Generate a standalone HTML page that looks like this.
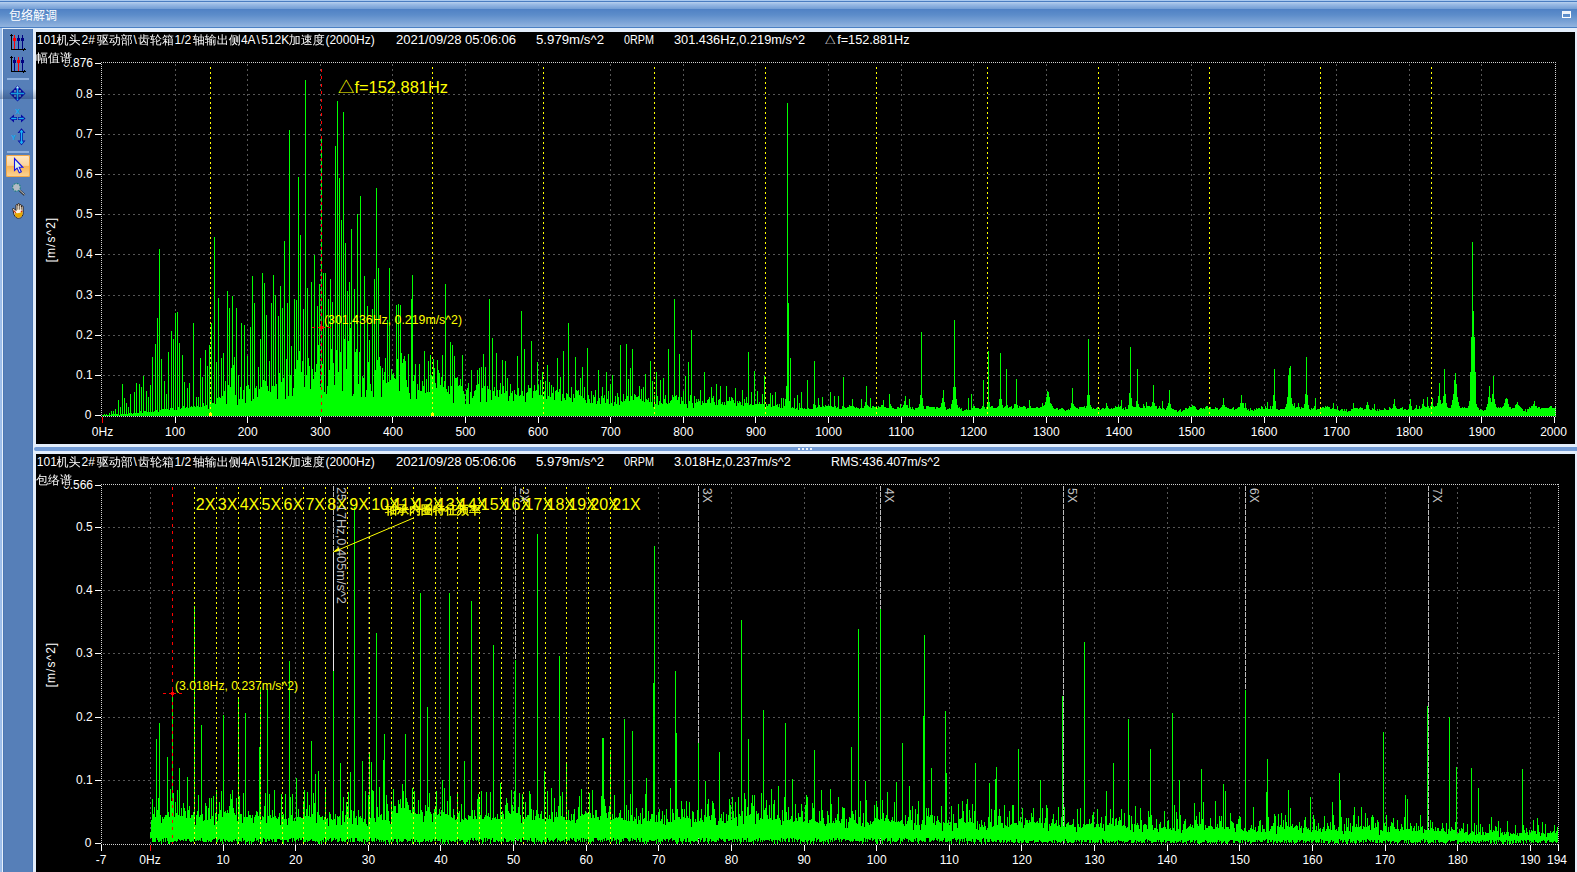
<!DOCTYPE html>
<html lang="zh"><head><meta charset="utf-8"><title>包络解调</title>
<style>
html,body{margin:0;padding:0;}
body{width:1577px;height:872px;overflow:hidden;position:relative;background:#e3eefb;font-family:"Liberation Sans","Noto Sans CJK SC",sans-serif;font-size:12px;}
#title{position:absolute;left:0;top:0;width:1577px;height:28px;
 background:linear-gradient(to bottom,#a9c9ef 0,#a9c9ef 1px,#4a7dc1 1px,#4a7dc1 2px,#bad2ee 2px,#9dbde6 4px,#729dd4 9px,#5082c5 9.5px,#5d8dca 15px,#7ba3d6 22px,#8fb2de 26.5px,#4a7fc3 27px,#4a7fc3 28px);}
#title span{position:absolute;left:9px;top:7.7px;color:#fff;font-size:12px;line-height:16px;letter-spacing:0px;}
#maxbtn{position:absolute;left:1562px;top:11px;width:7px;height:3px;border:1px solid #fff;border-top:3px solid #eef3fb;}
#lstrip{position:absolute;left:0;top:28px;width:3px;height:844px;background:linear-gradient(to right,#a2c2ec 0,#98b9e6 2px,#e8f1fc 2px,#e8f1fc 3px);}
#toolbar{position:absolute;left:3px;top:29px;width:30px;height:843px;background:#567fb8;box-shadow:inset 1px 0 0 #4c77b3,inset -1px 0 0 #4c77b3;}
.sep{position:absolute;left:4px;margin-top:1px;width:22px;height:2px;background:#8eb0de;}
#selbtn{position:absolute;left:3px;top:126px;width:24px;height:22px;border-radius:2px;
 background:linear-gradient(to bottom,#fee9c8 0,#fbd49c 47%,#f8b458 52%,#fcd698 100%);box-shadow:0 0 0 1px #f3a848 inset;}
.panel{position:absolute;left:36px;width:1539px;background:#000;}
#p1{top:32px;height:412px;}
#p2{top:454px;height:418px;}
#split{position:absolute;left:34px;top:447px;width:1543px;height:4px;background:#739cd6;border-radius:2px 0 0 2px;}
#grip{position:absolute;left:764px;top:1px;width:14px;height:2px;background:repeating-linear-gradient(to right,#eef4fc 0,#eef4fc 2px,transparent 2px,transparent 4px);}
svg{position:absolute;left:0;top:0;}
svg text{font-family:"Liberation Sans","Noto Sans CJK SC",sans-serif;}
.w{fill:#fff;font-size:12px;}
.y{fill:#ffff00;}
.cj{font-family:"Liberation Sans","WenQuanYi Zen Hei","Noto Sans CJK SC",sans-serif;}
</style></head><body>
<div id="title"><span>包络解调</span><div id="maxbtn"></div></div>
<div id="lstrip"></div>
<div id="toolbar">
<div class="sep" style="top:48px"></div>
<div class="sep" style="top:121px"></div>
<div id="selbtn"></div>

<svg width="30" height="200" viewBox="3 29 30 200">
<g shape-rendering="crispEdges"><path d="M11.5 34v15h14" stroke="#000" fill="none"/><path d="M10 36l1.5-2.5l1.5 2.5zM23.5 47.5l2.5 1.5l-2.5 1.5z" fill="#000"/><path d="M14.5 35v14" stroke="#ff0000" stroke-width="1"/><rect x="13.0" y="38" width="3" height="3" fill="#ff0000"/><path d="M18.5 35v14" stroke="#000080" stroke-width="1"/><rect x="17.0" y="38" width="3" height="3" fill="#000080"/><path d="M22.5 35v14" stroke="#000080" stroke-width="1"/><rect x="21.0" y="38" width="3" height="3" fill="#000080"/></g>
<g shape-rendering="crispEdges"><path d="M11.5 56v15h14" stroke="#000" fill="none"/><path d="M10 58l1.5-2.5l1.5 2.5zM23.5 69.5l2.5 1.5l-2.5 1.5z" fill="#000"/><path d="M14.5 57v14" stroke="#000080" stroke-width="1"/><rect x="13.0" y="60" width="3" height="3" fill="#000080"/><path d="M18.5 57v14" stroke="#ff0000" stroke-width="1"/><rect x="17.0" y="60" width="3" height="3" fill="#ff0000"/><path d="M22.5 57v14" stroke="#000080" stroke-width="1"/><rect x="21.0" y="60" width="3" height="3" fill="#000080"/></g>
<path d="M17.5 85.5L25.5 93.5L17.5 101.5L9.5 93.5z" fill="#0808a0"/>
<path d="M14 90h2.2v2.2H14zM18.8 90H21v2.2h-2.2zM14 94.8h2.2V97H14zM18.8 94.8H21V97h-2.2z" fill="#5a7fb4"/>
<path d="M10.8 93.5h13.4M17.5 86.8v13.4" stroke="#18b4f4" stroke-width="1.5" fill="none"/>
<path d="M17.5 86l1.6 2.2h-3.2z" fill="#c8f0ff"/>
<path d="M9.5 118.5l4.5-4v2.5h3v3h-3v2.5zM25.5 118.5l-4.5-4v2.5h-3v3h3v2.5z" fill="#0808a0"/>
<path d="M11.2 118.5h5.3M18.5 118.5h5.3" stroke="#18b4f4" stroke-width="1.5" fill="none"/>
<text x="17.5" y="113.5" font-size="7" font-weight="bold" fill="#10a8f0" text-anchor="middle">X</text>
<path d="M21.5 128.3l4 4.7h-2.5v7.500h2.5l-4 4.700l-4-4.700h2.5v-7.500h-2.5z" fill="#0808a0"/>
<path d="M21.5 130.500v13" stroke="#18b4f4" stroke-width="1.5" fill="none"/>
<path d="M21.5 129.800l2.200 2.600h-4.400zM21.5 144.200l2.200-2.600h-4.400z" fill="#18b4f4"/>
<text x="13.5" y="139.5" font-size="7" font-weight="bold" fill="#10a8f0" text-anchor="middle">Y</text>
<path d="M14.5 158.5v12l2.6-2.4l2.2 4.6l2-0.9l-2.1-4.5h3.6z" fill="#dcf4ec" stroke="#1414e6" stroke-width="1.1" stroke-linejoin="miter"/>
<circle cx="16.5" cy="187.3" r="3.9" fill="#b4bcc4" stroke="#1f7f7f" stroke-width="1.1" stroke-dasharray="2 1"/><path d="M19.8 190.600l4.8 4.400" stroke="#282828" stroke-width="2.2"/><path d="M19.8 190.300l4.8 4.400" stroke="#e0e0e0" stroke-width="0.9"/>
<g transform="translate(0 2.2)"><path d="M13 208c-1-1.5 0-2.5 1.5-1.2l1.5 1.5v-5c0-1.3 1.8-1.3 1.8 0v-1c0-1.3 1.8-1.3 1.8 0v1c0-1.2 1.8-1.2 1.8 0v1.2c0-1.1 1.7-1.1 1.7 0v6c0 3-1.5 5.5-4.5 5.5c-2.500 0-3.500-1.500-4.500-3.500z" fill="#fff4e4" stroke="#201000" stroke-width="0.9"/><path d="M15.200 210.500c2 1 5 0.500 7.400-1.500v1.500c0 2.800-1.400 5-4 5c-2 0-3-1.200-3.800-2.800z" fill="#e8a800"/><path d="M17.800 203.500v4M19.600 203.500v4M21.400 204v3.500" stroke="#201000" stroke-width="0.6"/><path d="M13.800 208.500l2 2.200" stroke="#d03010" stroke-width="1.2" fill="none"/><circle cx="21.500" cy="209.200" r="0.800" fill="#d03010"/></g>
</svg></div>
<div style="position:absolute;left:0;top:89px;width:36px;height:10px;background:linear-gradient(to bottom,rgba(20,40,80,0),rgba(20,40,80,0.32))"></div>
<div class="panel" id="p1"><svg width="1539" height="412" viewBox="36 32 1539 412">
<g shape-rendering="crispEdges" fill="none" stroke-width="1">
<path d="M175.5 64V416" stroke="#565656" stroke-dasharray="2 3" stroke-dashoffset="0"/>
<path d="M247.5 64V416" stroke="#565656" stroke-dasharray="2 3" stroke-dashoffset="0"/>
<path d="M320.5 64V416" stroke="#565656" stroke-dasharray="2 3" stroke-dashoffset="0"/>
<path d="M392.5 64V416" stroke="#565656" stroke-dasharray="2 3" stroke-dashoffset="0"/>
<path d="M465.5 64V416" stroke="#565656" stroke-dasharray="2 3" stroke-dashoffset="0"/>
<path d="M538.5 64V416" stroke="#565656" stroke-dasharray="2 3" stroke-dashoffset="0"/>
<path d="M610.5 64V416" stroke="#565656" stroke-dasharray="2 3" stroke-dashoffset="0"/>
<path d="M683.5 64V416" stroke="#565656" stroke-dasharray="2 3" stroke-dashoffset="0"/>
<path d="M755.5 64V416" stroke="#565656" stroke-dasharray="2 3" stroke-dashoffset="0"/>
<path d="M828.5 64V416" stroke="#565656" stroke-dasharray="2 3" stroke-dashoffset="0"/>
<path d="M901.5 64V416" stroke="#565656" stroke-dasharray="2 3" stroke-dashoffset="0"/>
<path d="M973.5 64V416" stroke="#565656" stroke-dasharray="2 3" stroke-dashoffset="0"/>
<path d="M1046.5 64V416" stroke="#565656" stroke-dasharray="2 3" stroke-dashoffset="0"/>
<path d="M1118.5 64V416" stroke="#565656" stroke-dasharray="2 3" stroke-dashoffset="0"/>
<path d="M1191.5 64V416" stroke="#565656" stroke-dasharray="2 3" stroke-dashoffset="0"/>
<path d="M1264.5 64V416" stroke="#565656" stroke-dasharray="2 3" stroke-dashoffset="0"/>
<path d="M1336.5 64V416" stroke="#565656" stroke-dasharray="2 3" stroke-dashoffset="0"/>
<path d="M1409.5 64V416" stroke="#565656" stroke-dasharray="2 3" stroke-dashoffset="0"/>
<path d="M1481.5 64V416" stroke="#565656" stroke-dasharray="2 3" stroke-dashoffset="0"/>
<path d="M103 375.5H1555" stroke="#565656" stroke-dasharray="2 3"/>
<path d="M103 335.5H1555" stroke="#565656" stroke-dasharray="2 3"/>
<path d="M103 295.5H1555" stroke="#565656" stroke-dasharray="2 3"/>
<path d="M103 254.5H1555" stroke="#565656" stroke-dasharray="2 3"/>
<path d="M103 214.5H1555" stroke="#565656" stroke-dasharray="2 3"/>
<path d="M103 174.5H1555" stroke="#565656" stroke-dasharray="2 3"/>
<path d="M103 134.5H1555" stroke="#565656" stroke-dasharray="2 3"/>
<path d="M103 94.5H1555" stroke="#565656" stroke-dasharray="2 3"/>
<path d="M95 415.5h6M95 375.5h6M95 335.5h6M95 295.5h6M95 254.5h6M95 214.5h6M95 174.5h6M95 134.5h6M95 94.5h6M95 63.5h6M175.5 417v6M247.5 417v6M320.5 417v6M392.5 417v6M465.5 417v6M538.5 417v6M610.5 417v6M683.5 417v6M755.5 417v6M828.5 417v6M901.5 417v6M973.5 417v6M1046.5 417v6M1118.5 417v6M1191.5 417v6M1264.5 417v6M1336.5 417v6M1409.5 417v6M1481.5 417v6M1554.5 417v6" stroke="#fff"/>
<path d="M102.5 417v6" stroke="#ff0000"/>
<path d="M102.5 416v-1M103.5 416v-1M104.5 416v-2M105.5 416v-1M106.5 416v-2M107.5 416v-1M108.5 416v-1M109.5 416v-3M110.5 416v-1M111.5 416v-5M112.5 416v-2M113.5 416v-5M114.5 416v-2M115.5 416v-7M116.5 416v-2M117.5 416v-2M118.5 416v-16M119.5 416v-1M120.5 416v-9M121.5 416v-2M122.5 416v-32M123.5 416v-2M124.5 416v-18M125.5 416v-2M126.5 416v-13M127.5 416v-2M128.5 416v-9M129.5 416v-3M130.5 416v-22M131.5 416v-3M132.5 416v-2M133.5 416v-3M134.5 416v-24M135.5 416v-3M136.5 416v-33M137.5 416v-3M138.5 416v-3M139.5 416v-32M140.5 416v-5M141.5 416v-29M142.5 416v-3M143.5 416v-40M144.5 416v-5M145.5 416v-5M146.5 416v-25M147.5 416v-4M148.5 416v-19M149.5 416v-4M150.5 416v-31M151.5 416v-4M152.5 416v-59M153.5 416v-4M154.5 416v-5M155.5 416v-72M156.5 416v-6M157.5 416v-98M158.5 416v-4M159.5 416v-167M160.5 416v-6M161.5 416v-57M162.5 416v-7M163.5 416v-7M164.5 416v-35M165.5 416v-7M166.5 416v-22M167.5 416v-7M168.5 416v-64M169.5 416v-6M170.5 416v-8M171.5 416v-85M172.5 416v-8M173.5 416v-77M174.5 416v-6M175.5 416v-103M176.5 416v-6M177.5 416v-104M178.5 416v-9M179.5 416v-73M180.5 416v-7M181.5 416v-8M182.5 416v-61M183.5 416v-10M184.5 416v-34M185.5 416v-8M186.5 416v-9M187.5 416v-28M188.5 416v-8M189.5 416v-33M190.5 416v-9M191.5 416v-10M192.5 416v-9M193.5 416v-93M194.5 416v-10M195.5 416v-9M196.5 416v-19M197.5 416v-10M198.5 416v-19M199.5 416v-9M200.5 416v-58M201.5 416v-9M202.5 416v-39M203.5 416v-13M204.5 416v-10M205.5 416v-66M206.5 416v-11M207.5 416v-50M208.5 416v-7M209.5 416v-71M210.5 416v-16M211.5 416v-93M212.5 416v-13M213.5 416v-13M214.5 416v-179M215.5 416v-12M216.5 416v-54M217.5 416v-18M218.5 416v-118M219.5 416v-19M220.5 416v-18M221.5 416v-58M222.5 416v-20M223.5 416v-63M224.5 416v-25M225.5 416v-35M226.5 416v-12M227.5 416v-125M228.5 416v-31M229.5 416v-108M230.5 416v-29M231.5 416v-48M232.5 416v-120M233.5 416v-51M234.5 416v-59M235.5 416v-21M236.5 416v-108M237.5 416v-11M238.5 416v-41M239.5 416v-17M240.5 416v-29M241.5 416v-93M242.5 416v-17M243.5 416v-26M244.5 416v-91M245.5 416v-13M246.5 416v-30M247.5 416v-60M248.5 416v-31M249.5 416v-27M250.5 416v-89M251.5 416v-15M252.5 416v-140M253.5 416v-17M254.5 416v-113M255.5 416v-28M256.5 416v-30M257.5 416v-19M258.5 416v-49M259.5 416v-27M260.5 416v-77M261.5 416v-29M262.5 416v-143M263.5 416v-36M264.5 416v-133M265.5 416v-35M266.5 416v-101M267.5 416v-30M268.5 416v-25M269.5 416v-55M270.5 416v-24M271.5 416v-113M272.5 416v-30M273.5 416v-141M274.5 416v-30M275.5 416v-121M276.5 416v-32M277.5 416v-17M278.5 416v-100M279.5 416v-43M280.5 416v-130M281.5 416v-34M282.5 416v-108M283.5 416v-38M284.5 416v-175M285.5 416v-17M286.5 416v-57M287.5 416v-113M288.5 416v-20M289.5 416v-286M290.5 416v-41M291.5 416v-70M292.5 416v-20M293.5 416v-28M294.5 416v-117M295.5 416v-47M296.5 416v-116M297.5 416v-56M298.5 416v-239M299.5 416v-65M300.5 416v-181M301.5 416v-44M302.5 416v-55M303.5 416v-107M304.5 416v-29M305.5 416v-336M306.5 416v-41M307.5 416v-128M308.5 416v-58M309.5 416v-50M310.5 416v-27M311.5 416v-134M312.5 416v-47M313.5 416v-37M314.5 416v-161M315.5 416v-44M316.5 416v-52M317.5 416v-110M318.5 416v-71M319.5 416v-132M320.5 416v-29M321.5 416v-280M322.5 416v-52M323.5 416v-143M324.5 416v-24M325.5 416v-143M326.5 416v-22M327.5 416v-30M328.5 416v-117M329.5 416v-46M330.5 416v-137M331.5 416v-67M332.5 416v-114M333.5 416v-53M334.5 416v-31M335.5 416v-270M336.5 416v-66M337.5 416v-315M338.5 416v-44M339.5 416v-238M340.5 416v-64M341.5 416v-196M342.5 416v-25M343.5 416v-304M344.5 416v-77M345.5 416v-173M346.5 416v-47M347.5 416v-125M348.5 416v-75M349.5 416v-134M350.5 416v-88M351.5 416v-187M352.5 416v-20M353.5 416v-22M354.5 416v-127M355.5 416v-64M356.5 416v-67M357.5 416v-202M358.5 416v-32M359.5 416v-64M360.5 416v-220M361.5 416v-19M362.5 416v-40M363.5 416v-38M364.5 416v-140M365.5 416v-19M366.5 416v-26M367.5 416v-110M368.5 416v-54M369.5 416v-76M370.5 416v-32M371.5 416v-25M372.5 416v-107M373.5 416v-19M374.5 416v-137M375.5 416v-46M376.5 416v-228M377.5 416v-56M378.5 416v-148M379.5 416v-59M380.5 416v-50M381.5 416v-19M382.5 416v-48M383.5 416v-36M384.5 416v-44M385.5 416v-58M386.5 416v-33M387.5 416v-96M388.5 416v-34M389.5 416v-148M390.5 416v-36M391.5 416v-47M392.5 416v-41M393.5 416v-43M394.5 416v-38M395.5 416v-37M396.5 416v-111M397.5 416v-57M398.5 416v-112M399.5 416v-25M400.5 416v-111M401.5 416v-63M402.5 416v-53M403.5 416v-57M404.5 416v-60M405.5 416v-55M406.5 416v-36M407.5 416v-29M408.5 416v-62M409.5 416v-23M410.5 416v-17M411.5 416v-117M412.5 416v-141M413.5 416v-35M414.5 416v-41M415.5 416v-52M416.5 416v-17M417.5 416v-32M418.5 416v-26M419.5 416v-52M420.5 416v-25M421.5 416v-25M422.5 416v-35M423.5 416v-30M424.5 416v-65M425.5 416v-23M426.5 416v-37M427.5 416v-24M428.5 416v-55M429.5 416v-24M430.5 416v-61M431.5 416v-41M432.5 416v-40M433.5 416v-57M434.5 416v-48M435.5 416v-33M436.5 416v-28M437.5 416v-56M438.5 416v-46M439.5 416v-43M440.5 416v-31M441.5 416v-39M442.5 416v-61M443.5 416v-29M444.5 416v-35M445.5 416v-132M446.5 416v-27M447.5 416v-24M448.5 416v-30M449.5 416v-22M450.5 416v-74M451.5 416v-30M452.5 416v-71M453.5 416v-13M454.5 416v-60M455.5 416v-38M456.5 416v-38M457.5 416v-39M458.5 416v-30M459.5 416v-31M460.5 416v-37M461.5 416v-30M462.5 416v-61M463.5 416v-25M464.5 416v-22M465.5 416v-12M466.5 416v-26M467.5 416v-28M468.5 416v-33M469.5 416v-12M470.5 416v-24M471.5 416v-46M472.5 416v-18M473.5 416v-20M474.5 416v-25M475.5 416v-26M476.5 416v-31M477.5 416v-46M478.5 416v-32M479.5 416v-48M480.5 416v-14M481.5 416v-49M482.5 416v-28M483.5 416v-62M484.5 416v-30M485.5 416v-49M486.5 416v-14M487.5 416v-30M488.5 416v-27M489.5 416v-117M490.5 416v-26M491.5 416v-16M492.5 416v-78M493.5 416v-25M494.5 416v-29M495.5 416v-20M496.5 416v-63M497.5 416v-26M498.5 416v-19M499.5 416v-26M500.5 416v-33M501.5 416v-22M502.5 416v-56M503.5 416v-30M504.5 416v-23M505.5 416v-55M506.5 416v-25M507.5 416v-38M508.5 416v-15M509.5 416v-20M510.5 416v-32M511.5 416v-23M512.5 416v-25M513.5 416v-15M514.5 416v-26M515.5 416v-22M516.5 416v-21M517.5 416v-60M518.5 416v-28M519.5 416v-20M520.5 416v-21M521.5 416v-105M522.5 416v-25M523.5 416v-20M524.5 416v-67M525.5 416v-14M526.5 416v-23M527.5 416v-24M528.5 416v-31M529.5 416v-28M530.5 416v-28M531.5 416v-75M532.5 416v-18M533.5 416v-25M534.5 416v-31M535.5 416v-25M536.5 416v-26M537.5 416v-54M538.5 416v-31M539.5 416v-21M540.5 416v-36M541.5 416v-21M542.5 416v-44M543.5 416v-20M544.5 416v-25M545.5 416v-35M546.5 416v-17M547.5 416v-51M548.5 416v-20M549.5 416v-34M550.5 416v-19M551.5 416v-31M552.5 416v-23M553.5 416v-29M554.5 416v-16M555.5 416v-25M556.5 416v-26M557.5 416v-58M558.5 416v-24M559.5 416v-27M560.5 416v-39M561.5 416v-15M562.5 416v-22M563.5 416v-65M564.5 416v-18M565.5 416v-16M566.5 416v-23M567.5 416v-22M568.5 416v-93M569.5 416v-19M570.5 416v-18M571.5 416v-29M572.5 416v-14M573.5 416v-22M574.5 416v-18M575.5 416v-59M576.5 416v-26M577.5 416v-25M578.5 416v-26M579.5 416v-21M580.5 416v-38M581.5 416v-20M582.5 416v-49M583.5 416v-18M584.5 416v-29M585.5 416v-16M586.5 416v-13M587.5 416v-68M588.5 416v-21M589.5 416v-17M590.5 416v-13M591.5 416v-25M592.5 416v-13M593.5 416v-21M594.5 416v-19M595.5 416v-26M596.5 416v-12M597.5 416v-15M598.5 416v-46M599.5 416v-18M600.5 416v-12M601.5 416v-20M602.5 416v-29M603.5 416v-18M604.5 416v-21M605.5 416v-13M606.5 416v-44M607.5 416v-17M608.5 416v-25M609.5 416v-12M610.5 416v-32M611.5 416v-13M612.5 416v-41M613.5 416v-10M614.5 416v-14M615.5 416v-20M616.5 416v-12M617.5 416v-23M618.5 416v-19M619.5 416v-11M620.5 416v-71M621.5 416v-15M622.5 416v-14M623.5 416v-22M624.5 416v-15M625.5 416v-17M626.5 416v-72M627.5 416v-20M628.5 416v-37M629.5 416v-15M630.5 416v-48M631.5 416v-20M632.5 416v-67M633.5 416v-16M634.5 416v-22M635.5 416v-21M636.5 416v-19M637.5 416v-19M638.5 416v-20M639.5 416v-30M640.5 416v-17M641.5 416v-27M642.5 416v-15M643.5 416v-29M644.5 416v-14M645.5 416v-42M646.5 416v-17M647.5 416v-16M648.5 416v-18M649.5 416v-14M650.5 416v-55M651.5 416v-14M652.5 416v-35M653.5 416v-9M654.5 416v-21M655.5 416v-12M656.5 416v-44M657.5 416v-20M658.5 416v-11M659.5 416v-15M660.5 416v-36M661.5 416v-13M662.5 416v-12M663.5 416v-38M664.5 416v-17M665.5 416v-21M666.5 416v-13M667.5 416v-12M668.5 416v-67M669.5 416v-13M670.5 416v-15M671.5 416v-16M672.5 416v-21M673.5 416v-19M674.5 416v-117M675.5 416v-20M676.5 416v-21M677.5 416v-16M678.5 416v-19M679.5 416v-62M680.5 416v-12M681.5 416v-19M682.5 416v-15M683.5 416v-25M684.5 416v-12M685.5 416v-40M686.5 416v-12M687.5 416v-8M688.5 416v-54M689.5 416v-15M690.5 416v-21M691.5 416v-86M692.5 416v-13M693.5 416v-8M694.5 416v-20M695.5 416v-13M696.5 416v-17M697.5 416v-14M698.5 416v-17M699.5 416v-15M700.5 416v-26M701.5 416v-11M702.5 416v-15M703.5 416v-13M704.5 416v-44M705.5 416v-13M706.5 416v-13M707.5 416v-16M708.5 416v-17M709.5 416v-19M710.5 416v-13M711.5 416v-29M712.5 416v-18M713.5 416v-20M714.5 416v-14M715.5 416v-11M716.5 416v-32M717.5 416v-11M718.5 416v-16M719.5 416v-17M720.5 416v-30M721.5 416v-12M722.5 416v-14M723.5 416v-11M724.5 416v-14M725.5 416v-11M726.5 416v-30M727.5 416v-15M728.5 416v-15M729.5 416v-19M730.5 416v-15M731.5 416v-19M732.5 416v-18M733.5 416v-16M734.5 416v-13M735.5 416v-28M736.5 416v-10M737.5 416v-15M738.5 416v-13M739.5 416v-15M740.5 416v-14M741.5 416v-11M742.5 416v-26M743.5 416v-10M744.5 416v-17M745.5 416v-13M746.5 416v-19M747.5 416v-13M748.5 416v-64M749.5 416v-11M750.5 416v-12M751.5 416v-24M752.5 416v-11M753.5 416v-11M754.5 416v-45M755.5 416v-12M756.5 416v-12M757.5 416v-25M758.5 416v-12M759.5 416v-14M760.5 416v-12M761.5 416v-12M762.5 416v-22M763.5 416v-12M764.5 416v-40M765.5 416v-7M766.5 416v-12M767.5 416v-10M768.5 416v-12M769.5 416v-12M770.5 416v-23M771.5 416v-9M772.5 416v-21M773.5 416v-10M774.5 416v-10M775.5 416v-24M776.5 416v-11M777.5 416v-12M778.5 416v-9M779.5 416v-12M780.5 416v-8M781.5 416v-18M782.5 416v-8M783.5 416v-18M784.5 416v-10M785.5 416v-17M786.5 416v-30M787.5 416v-313M788.5 416v-113M789.5 416v-15M790.5 416v-58M791.5 416v-8M792.5 416v-9M793.5 416v-8M794.5 416v-18M795.5 416v-7M796.5 416v-8M797.5 416v-21M798.5 416v-6M799.5 416v-13M800.5 416v-8M801.5 416v-24M802.5 416v-8M803.5 416v-7M804.5 416v-8M805.5 416v-7M806.5 416v-7M807.5 416v-36M808.5 416v-8M809.5 416v-7M810.5 416v-7M811.5 416v-7M812.5 416v-7M813.5 416v-12M814.5 416v-55M815.5 416v-11M816.5 416v-8M817.5 416v-9M818.5 416v-18M819.5 416v-11M820.5 416v-9M821.5 416v-9M822.5 416v-19M823.5 416v-10M824.5 416v-9M825.5 416v-11M826.5 416v-10M827.5 416v-10M828.5 416v-11M829.5 416v-10M830.5 416v-24M831.5 416v-10M832.5 416v-9M833.5 416v-9M834.5 416v-20M835.5 416v-10M836.5 416v-8M837.5 416v-9M838.5 416v-20M839.5 416v-7M840.5 416v-7M841.5 416v-7M842.5 416v-10M843.5 416v-39M844.5 416v-9M845.5 416v-8M846.5 416v-8M847.5 416v-9M848.5 416v-9M849.5 416v-11M850.5 416v-10M851.5 416v-10M852.5 416v-17M853.5 416v-10M854.5 416v-9M855.5 416v-8M856.5 416v-9M857.5 416v-8M858.5 416v-8M859.5 416v-7M860.5 416v-8M861.5 416v-17M862.5 416v-8M863.5 416v-8M864.5 416v-10M865.5 416v-14M866.5 416v-30M867.5 416v-11M868.5 416v-10M869.5 416v-9M870.5 416v-18M871.5 416v-8M872.5 416v-10M873.5 416v-10M874.5 416v-9M875.5 416v-9M876.5 416v-10M877.5 416v-8M878.5 416v-10M879.5 416v-9M880.5 416v-9M881.5 416v-11M882.5 416v-11M883.5 416v-16M884.5 416v-9M885.5 416v-9M886.5 416v-8M887.5 416v-8M888.5 416v-8M889.5 416v-22M890.5 416v-12M891.5 416v-10M892.5 416v-8M893.5 416v-8M894.5 416v-7M895.5 416v-7M896.5 416v-7M897.5 416v-9M898.5 416v-9M899.5 416v-8M900.5 416v-12M901.5 416v-8M902.5 416v-9M903.5 416v-11M904.5 416v-15M905.5 416v-20M906.5 416v-11M907.5 416v-11M908.5 416v-8M909.5 416v-17M910.5 416v-9M911.5 416v-7M912.5 416v-9M913.5 416v-7M914.5 416v-6M915.5 416v-8M916.5 416v-8M917.5 416v-8M918.5 416v-9M919.5 416v-12M920.5 416v-21M921.5 416v-84M922.5 416v-18M923.5 416v-10M924.5 416v-7M925.5 416v-7M926.5 416v-10M927.5 416v-10M928.5 416v-10M929.5 416v-9M930.5 416v-9M931.5 416v-9M932.5 416v-9M933.5 416v-9M934.5 416v-9M935.5 416v-7M936.5 416v-9M937.5 416v-9M938.5 416v-8M939.5 416v-8M940.5 416v-9M941.5 416v-13M942.5 416v-18M943.5 416v-26M944.5 416v-14M945.5 416v-9M946.5 416v-6M947.5 416v-7M948.5 416v-7M949.5 416v-8M950.5 416v-7M951.5 416v-12M952.5 416v-16M953.5 416v-29M954.5 416v-96M955.5 416v-29M956.5 416v-17M957.5 416v-11M958.5 416v-8M959.5 416v-9M960.5 416v-7M961.5 416v-8M962.5 416v-5M963.5 416v-5M964.5 416v-6M965.5 416v-6M966.5 416v-7M967.5 416v-6M968.5 416v-18M969.5 416v-6M970.5 416v-6M971.5 416v-22M972.5 416v-8M973.5 416v-10M974.5 416v-10M975.5 416v-8M976.5 416v-8M977.5 416v-8M978.5 416v-8M979.5 416v-7M980.5 416v-7M981.5 416v-8M982.5 416v-10M983.5 416v-36M984.5 416v-9M985.5 416v-7M986.5 416v-9M987.5 416v-13M988.5 416v-65M989.5 416v-14M990.5 416v-9M991.5 416v-10M992.5 416v-10M993.5 416v-8M994.5 416v-8M995.5 416v-8M996.5 416v-8M997.5 416v-9M998.5 416v-10M999.5 416v-17M1000.5 416v-63M1001.5 416v-17M1002.5 416v-11M1003.5 416v-8M1004.5 416v-9M1005.5 416v-10M1006.5 416v-47M1007.5 416v-11M1008.5 416v-8M1009.5 416v-9M1010.5 416v-9M1011.5 416v-10M1012.5 416v-7M1013.5 416v-8M1014.5 416v-12M1015.5 416v-12M1016.5 416v-37M1017.5 416v-11M1018.5 416v-8M1019.5 416v-10M1020.5 416v-9M1021.5 416v-9M1022.5 416v-9M1023.5 416v-10M1024.5 416v-10M1025.5 416v-9M1026.5 416v-7M1027.5 416v-8M1028.5 416v-8M1029.5 416v-16M1030.5 416v-10M1031.5 416v-8M1032.5 416v-8M1033.5 416v-8M1034.5 416v-8M1035.5 416v-8M1036.5 416v-9M1037.5 416v-9M1038.5 416v-8M1039.5 416v-8M1040.5 416v-9M1041.5 416v-9M1042.5 416v-13M1043.5 416v-10M1044.5 416v-11M1045.5 416v-14M1046.5 416v-19M1047.5 416v-25M1048.5 416v-24M1049.5 416v-19M1050.5 416v-13M1051.5 416v-12M1052.5 416v-10M1053.5 416v-8M1054.5 416v-7M1055.5 416v-7M1056.5 416v-8M1057.5 416v-8M1058.5 416v-6M1059.5 416v-7M1060.5 416v-7M1061.5 416v-8M1062.5 416v-8M1063.5 416v-7M1064.5 416v-6M1065.5 416v-5M1066.5 416v-6M1067.5 416v-6M1068.5 416v-7M1069.5 416v-6M1070.5 416v-8M1071.5 416v-13M1072.5 416v-28M1073.5 416v-12M1074.5 416v-10M1075.5 416v-9M1076.5 416v-8M1077.5 416v-8M1078.5 416v-7M1079.5 416v-9M1080.5 416v-9M1081.5 416v-9M1082.5 416v-9M1083.5 416v-9M1084.5 416v-10M1085.5 416v-8M1086.5 416v-10M1087.5 416v-21M1088.5 416v-77M1089.5 416v-21M1090.5 416v-11M1091.5 416v-9M1092.5 416v-7M1093.5 416v-8M1094.5 416v-7M1095.5 416v-7M1096.5 416v-8M1097.5 416v-9M1098.5 416v-6M1099.5 416v-8M1100.5 416v-6M1101.5 416v-7M1102.5 416v-8M1103.5 416v-8M1104.5 416v-7M1105.5 416v-8M1106.5 416v-13M1107.5 416v-10M1108.5 416v-8M1109.5 416v-7M1110.5 416v-7M1111.5 416v-8M1112.5 416v-7M1113.5 416v-8M1114.5 416v-8M1115.5 416v-10M1116.5 416v-9M1117.5 416v-9M1118.5 416v-11M1119.5 416v-9M1120.5 416v-10M1121.5 416v-16M1122.5 416v-7M1123.5 416v-8M1124.5 416v-6M1125.5 416v-9M1126.5 416v-7M1127.5 416v-7M1128.5 416v-11M1129.5 416v-23M1130.5 416v-69M1131.5 416v-18M1132.5 416v-10M1133.5 416v-9M1134.5 416v-9M1135.5 416v-9M1136.5 416v-15M1137.5 416v-47M1138.5 416v-12M1139.5 416v-9M1140.5 416v-8M1141.5 416v-8M1142.5 416v-8M1143.5 416v-12M1144.5 416v-10M1145.5 416v-8M1146.5 416v-14M1147.5 416v-10M1148.5 416v-10M1149.5 416v-10M1150.5 416v-9M1151.5 416v-10M1152.5 416v-14M1153.5 416v-31M1154.5 416v-13M1155.5 416v-10M1156.5 416v-10M1157.5 416v-7M1158.5 416v-8M1159.5 416v-10M1160.5 416v-8M1161.5 416v-7M1162.5 416v-15M1163.5 416v-8M1164.5 416v-7M1165.5 416v-6M1166.5 416v-8M1167.5 416v-10M1168.5 416v-13M1169.5 416v-26M1170.5 416v-12M1171.5 416v-8M1172.5 416v-7M1173.5 416v-7M1174.5 416v-6M1175.5 416v-6M1176.5 416v-6M1177.5 416v-4M1178.5 416v-5M1179.5 416v-6M1180.5 416v-7M1181.5 416v-4M1182.5 416v-5M1183.5 416v-6M1184.5 416v-6M1185.5 416v-8M1186.5 416v-8M1187.5 416v-7M1188.5 416v-8M1189.5 416v-10M1190.5 416v-9M1191.5 416v-9M1192.5 416v-11M1193.5 416v-10M1194.5 416v-10M1195.5 416v-9M1196.5 416v-7M1197.5 416v-6M1198.5 416v-6M1199.5 416v-7M1200.5 416v-8M1201.5 416v-8M1202.5 416v-7M1203.5 416v-8M1204.5 416v-7M1205.5 416v-9M1206.5 416v-10M1207.5 416v-10M1208.5 416v-8M1209.5 416v-9M1210.5 416v-9M1211.5 416v-7M1212.5 416v-7M1213.5 416v-7M1214.5 416v-7M1215.5 416v-9M1216.5 416v-8M1217.5 416v-8M1218.5 416v-6M1219.5 416v-7M1220.5 416v-8M1221.5 416v-9M1222.5 416v-11M1223.5 416v-18M1224.5 416v-11M1225.5 416v-9M1226.5 416v-9M1227.5 416v-8M1228.5 416v-8M1229.5 416v-7M1230.5 416v-7M1231.5 416v-7M1232.5 416v-8M1233.5 416v-9M1234.5 416v-6M1235.5 416v-7M1236.5 416v-7M1237.5 416v-8M1238.5 416v-9M1239.5 416v-9M1240.5 416v-13M1241.5 416v-21M1242.5 416v-13M1243.5 416v-13M1244.5 416v-8M1245.5 416v-13M1246.5 416v-8M1247.5 416v-6M1248.5 416v-7M1249.5 416v-5M1250.5 416v-8M1251.5 416v-6M1252.5 416v-6M1253.5 416v-5M1254.5 416v-7M1255.5 416v-6M1256.5 416v-8M1257.5 416v-7M1258.5 416v-8M1259.5 416v-8M1260.5 416v-7M1261.5 416v-10M1262.5 416v-9M1263.5 416v-7M1264.5 416v-7M1265.5 416v-10M1266.5 416v-8M1267.5 416v-14M1268.5 416v-7M1269.5 416v-7M1270.5 416v-10M1271.5 416v-7M1272.5 416v-10M1273.5 416v-21M1274.5 416v-47M1275.5 416v-15M1276.5 416v-7M1277.5 416v-7M1278.5 416v-6M1279.5 416v-6M1280.5 416v-7M1281.5 416v-7M1282.5 416v-7M1283.5 416v-7M1284.5 416v-7M1285.5 416v-9M1286.5 416v-12M1287.5 416v-19M1288.5 416v-41M1289.5 416v-48M1290.5 416v-50M1291.5 416v-18M1292.5 416v-12M1293.5 416v-10M1294.5 416v-13M1295.5 416v-8M1296.5 416v-9M1297.5 416v-9M1298.5 416v-13M1299.5 416v-9M1300.5 416v-7M1301.5 416v-9M1302.5 416v-8M1303.5 416v-8M1304.5 416v-12M1305.5 416v-22M1306.5 416v-59M1307.5 416v-21M1308.5 416v-11M1309.5 416v-7M1310.5 416v-6M1311.5 416v-8M1312.5 416v-7M1313.5 416v-8M1314.5 416v-10M1315.5 416v-18M1316.5 416v-6M1317.5 416v-7M1318.5 416v-7M1319.5 416v-7M1320.5 416v-7M1321.5 416v-8M1322.5 416v-9M1323.5 416v-9M1324.5 416v-8M1325.5 416v-10M1326.5 416v-9M1327.5 416v-10M1328.5 416v-9M1329.5 416v-9M1330.5 416v-7M1331.5 416v-7M1332.5 416v-8M1333.5 416v-13M1334.5 416v-7M1335.5 416v-7M1336.5 416v-6M1337.5 416v-10M1338.5 416v-6M1339.5 416v-5M1340.5 416v-6M1341.5 416v-7M1342.5 416v-7M1343.5 416v-5M1344.5 416v-7M1345.5 416v-5M1346.5 416v-7M1347.5 416v-4M1348.5 416v-5M1349.5 416v-5M1350.5 416v-5M1351.5 416v-7M1352.5 416v-7M1353.5 416v-13M1354.5 416v-8M1355.5 416v-8M1356.5 416v-8M1357.5 416v-8M1358.5 416v-7M1359.5 416v-8M1360.5 416v-9M1361.5 416v-8M1362.5 416v-8M1363.5 416v-6M1364.5 416v-7M1365.5 416v-7M1366.5 416v-11M1367.5 416v-14M1368.5 416v-11M1369.5 416v-7M1370.5 416v-6M1371.5 416v-6M1372.5 416v-8M1373.5 416v-7M1374.5 416v-12M1375.5 416v-6M1376.5 416v-5M1377.5 416v-7M1378.5 416v-5M1379.5 416v-7M1380.5 416v-6M1381.5 416v-6M1382.5 416v-6M1383.5 416v-6M1384.5 416v-8M1385.5 416v-7M1386.5 416v-6M1387.5 416v-6M1388.5 416v-6M1389.5 416v-9M1390.5 416v-8M1391.5 416v-7M1392.5 416v-8M1393.5 416v-12M1394.5 416v-17M1395.5 416v-10M1396.5 416v-8M1397.5 416v-7M1398.5 416v-7M1399.5 416v-7M1400.5 416v-8M1401.5 416v-8M1402.5 416v-9M1403.5 416v-6M1404.5 416v-7M1405.5 416v-7M1406.5 416v-6M1407.5 416v-6M1408.5 416v-7M1409.5 416v-12M1410.5 416v-17M1411.5 416v-10M1412.5 416v-6M1413.5 416v-6M1414.5 416v-7M1415.5 416v-8M1416.5 416v-11M1417.5 416v-7M1418.5 416v-7M1419.5 416v-10M1420.5 416v-7M1421.5 416v-8M1422.5 416v-12M1423.5 416v-17M1424.5 416v-10M1425.5 416v-9M1426.5 416v-9M1427.5 416v-19M1428.5 416v-10M1429.5 416v-8M1430.5 416v-10M1431.5 416v-12M1432.5 416v-18M1433.5 416v-10M1434.5 416v-9M1435.5 416v-10M1436.5 416v-10M1437.5 416v-13M1438.5 416v-20M1439.5 416v-33M1440.5 416v-16M1441.5 416v-12M1442.5 416v-13M1443.5 416v-20M1444.5 416v-47M1445.5 416v-22M1446.5 416v-13M1447.5 416v-9M1448.5 416v-8M1449.5 416v-8M1450.5 416v-8M1451.5 416v-11M1452.5 416v-16M1453.5 416v-22M1454.5 416v-36M1455.5 416v-43M1456.5 416v-32M1457.5 416v-19M1458.5 416v-14M1459.5 416v-10M1460.5 416v-8M1461.5 416v-8M1462.5 416v-9M1463.5 416v-8M1464.5 416v-9M1465.5 416v-8M1466.5 416v-8M1467.5 416v-8M1468.5 416v-10M1469.5 416v-15M1470.5 416v-44M1471.5 416v-79M1472.5 416v-174M1473.5 416v-105M1474.5 416v-79M1475.5 416v-44M1476.5 416v-12M1477.5 416v-9M1478.5 416v-8M1479.5 416v-6M1480.5 416v-7M1481.5 416v-6M1482.5 416v-6M1483.5 416v-5M1484.5 416v-6M1485.5 416v-6M1486.5 416v-9M1487.5 416v-12M1488.5 416v-19M1489.5 416v-30M1490.5 416v-18M1491.5 416v-14M1492.5 416v-22M1493.5 416v-40M1494.5 416v-17M1495.5 416v-12M1496.5 416v-9M1497.5 416v-8M1498.5 416v-9M1499.5 416v-8M1500.5 416v-9M1501.5 416v-8M1502.5 416v-9M1503.5 416v-10M1504.5 416v-13M1505.5 416v-17M1506.5 416v-18M1507.5 416v-17M1508.5 416v-12M1509.5 416v-9M1510.5 416v-9M1511.5 416v-7M1512.5 416v-8M1513.5 416v-8M1514.5 416v-8M1515.5 416v-11M1516.5 416v-12M1517.5 416v-14M1518.5 416v-11M1519.5 416v-10M1520.5 416v-9M1521.5 416v-8M1522.5 416v-7M1523.5 416v-5M1524.5 416v-5M1525.5 416v-7M1526.5 416v-4M1527.5 416v-7M1528.5 416v-7M1529.5 416v-9M1530.5 416v-8M1531.5 416v-10M1532.5 416v-10M1533.5 416v-12M1534.5 416v-15M1535.5 416v-10M1536.5 416v-10M1537.5 416v-8M1538.5 416v-9M1539.5 416v-9M1540.5 416v-7M1541.5 416v-8M1542.5 416v-8M1543.5 416v-8M1544.5 416v-8M1545.5 416v-8M1546.5 416v-8M1547.5 416v-8M1548.5 416v-8M1549.5 416v-9M1550.5 416v-10M1551.5 416v-10M1552.5 416v-8M1553.5 416v-8M1554.5 416v-8M1555.5 416v-9" stroke="#00ff00"/>
<path d="M101 416.5H1556" stroke="#000"/>
<path d="M101 62.5H1556M101 416.5H1556" stroke="#d2d2d2" stroke-dasharray="1 1"/>
<path d="M101.5 62V417M1555.5 62V417" stroke="#d2d2d2" stroke-dasharray="1 1"/>
<path d="M210.5 67V416" stroke="#ffff00" stroke-dasharray="2 3" stroke-dashoffset="0"/>
<path d="M432.5 67V416" stroke="#ffff00" stroke-dasharray="2 3" stroke-dashoffset="0"/>
<path d="M543.5 67V416" stroke="#ffff00" stroke-dasharray="2 3" stroke-dashoffset="0"/>
<path d="M654.5 67V416" stroke="#ffff00" stroke-dasharray="2 3" stroke-dashoffset="0"/>
<path d="M765.5 67V416" stroke="#ffff00" stroke-dasharray="2 3" stroke-dashoffset="0"/>
<path d="M876.5 67V416" stroke="#ffff00" stroke-dasharray="2 3" stroke-dashoffset="0"/>
<path d="M987.5 67V416" stroke="#ffff00" stroke-dasharray="2 3" stroke-dashoffset="0"/>
<path d="M1098.5 67V416" stroke="#ffff00" stroke-dasharray="2 3" stroke-dashoffset="0"/>
<path d="M1209.5 67V416" stroke="#ffff00" stroke-dasharray="2 3" stroke-dashoffset="0"/>
<path d="M1320.5 67V416" stroke="#ffff00" stroke-dasharray="2 3" stroke-dashoffset="0"/>
<path d="M1431.5 67V416" stroke="#ffff00" stroke-dasharray="2 3" stroke-dashoffset="0"/>
<path d="M321.5 69V416" stroke="#ff0000" stroke-dasharray="3 4.4" stroke-dashoffset="0"/>
<path d="M318 327.5h7M321.5 324v7M320 326.5h3M320 328.5h3" stroke="#ff0000"/><path d="M312 327.5h3M328 327.5h3" stroke="#ff0000"/>
<rect x="209" y="413" width="3" height="3" fill="#ffff00" stroke="none"/><rect x="431" y="413" width="3" height="3" fill="#ffff00" stroke="none"/>
</g>
<text class="w cj" y="44"><tspan x="36.8">101</tspan><tspan x="56.5">机头</tspan><tspan x="81.6">2#</tspan><tspan x="96.7">驱动部</tspan><tspan x="133.4">\</tspan><tspan x="137.9">齿轮箱</tspan><tspan x="174.6">1/2</tspan><tspan x="192.7">轴输出侧</tspan><tspan x="240.9">4A</tspan><tspan x="256.4">\</tspan><tspan x="261.2">512K</tspan><tspan x="288.8">加速度</tspan><tspan x="325.4">(2000Hz)</tspan></text>
<text class="w" x="396" y="44" textLength="120" lengthAdjust="spacingAndGlyphs">2021/09/28 05:06:06</text>
<text class="w" x="536" y="44" textLength="68" lengthAdjust="spacingAndGlyphs">5.979m/s^2</text>
<text class="w" x="624" y="44" textLength="30" lengthAdjust="spacingAndGlyphs">0RPM</text>
<text class="w" x="674" y="44" textLength="131" lengthAdjust="spacingAndGlyphs">301.436Hz,0.219m/s^2</text>
<text class="w" y="44"><tspan x="825" font-size="10.5">△</tspan><tspan x="837.2" textLength="72.3" lengthAdjust="spacingAndGlyphs">f=152.881Hz</tspan></text>
<text class="w" x="91.5" y="419.0" text-anchor="end">0</text>
<text class="w" x="92.8" y="379.0" text-anchor="end">0.1</text>
<text class="w" x="92.8" y="339.0" text-anchor="end">0.2</text>
<text class="w" x="92.8" y="299.0" text-anchor="end">0.3</text>
<text class="w" x="92.8" y="258.0" text-anchor="end">0.4</text>
<text class="w" x="92.8" y="218.0" text-anchor="end">0.5</text>
<text class="w" x="92.8" y="178.0" text-anchor="end">0.6</text>
<text class="w" x="92.8" y="138.0" text-anchor="end">0.7</text>
<text class="w" x="92.8" y="98.0" text-anchor="end">0.8</text>
<text class="w" x="93" y="66.8" text-anchor="end">0.876</text>
<rect x="36" y="50" width="36" height="14.5" fill="#000"/>
<text class="w cj" x="36" y="62.3">幅值谱</text>
<text class="w" x="102.5" y="436" text-anchor="middle">0Hz</text>
<text class="w" x="175.1" y="436" text-anchor="middle">100</text>
<text class="w" x="247.7" y="436" text-anchor="middle">200</text>
<text class="w" x="320.3" y="436" text-anchor="middle">300</text>
<text class="w" x="392.9" y="436" text-anchor="middle">400</text>
<text class="w" x="465.5" y="436" text-anchor="middle">500</text>
<text class="w" x="538.1" y="436" text-anchor="middle">600</text>
<text class="w" x="610.7" y="436" text-anchor="middle">700</text>
<text class="w" x="683.3" y="436" text-anchor="middle">800</text>
<text class="w" x="755.9" y="436" text-anchor="middle">900</text>
<text class="w" x="828.5" y="436" text-anchor="middle">1000</text>
<text class="w" x="901.1" y="436" text-anchor="middle">1100</text>
<text class="w" x="973.7" y="436" text-anchor="middle">1200</text>
<text class="w" x="1046.3" y="436" text-anchor="middle">1300</text>
<text class="w" x="1118.9" y="436" text-anchor="middle">1400</text>
<text class="w" x="1191.5" y="436" text-anchor="middle">1500</text>
<text class="w" x="1264.1" y="436" text-anchor="middle">1600</text>
<text class="w" x="1336.7" y="436" text-anchor="middle">1700</text>
<text class="w" x="1409.3" y="436" text-anchor="middle">1800</text>
<text class="w" x="1481.9" y="436" text-anchor="middle">1900</text>
<text class="w" x="1553.5" y="436" text-anchor="middle">2000</text>
<text class="w" x="54.8" y="262.3" textLength="44.5" lengthAdjust="spacing" transform="rotate(-90 54.8 262.3)">[m/s^2]</text>
<text class="y" x="338" y="93" font-size="16" textLength="110" lengthAdjust="spacingAndGlyphs">△f=152.881Hz</text>
<text class="y" x="324" y="324" font-size="12" textLength="138" lengthAdjust="spacingAndGlyphs">(301.436Hz, 0.219m/s^2)</text>
</svg></div>
<div id="split"><div id="grip"></div></div>
<div class="panel" id="p2"><svg width="1539" height="418" viewBox="36 454 1539 418">
<g shape-rendering="crispEdges" fill="none" stroke-width="1">
<path d="M150.5 487V844" stroke="#565656" stroke-dasharray="2 3" stroke-dashoffset="0"/>
<path d="M223.5 487V844" stroke="#565656" stroke-dasharray="2 3" stroke-dashoffset="0"/>
<path d="M295.5 487V844" stroke="#565656" stroke-dasharray="2 3" stroke-dashoffset="0"/>
<path d="M368.5 487V844" stroke="#565656" stroke-dasharray="2 3" stroke-dashoffset="0"/>
<path d="M440.5 487V844" stroke="#565656" stroke-dasharray="2 3" stroke-dashoffset="0"/>
<path d="M513.5 487V844" stroke="#565656" stroke-dasharray="2 3" stroke-dashoffset="0"/>
<path d="M586.5 487V844" stroke="#565656" stroke-dasharray="2 3" stroke-dashoffset="0"/>
<path d="M658.5 487V844" stroke="#565656" stroke-dasharray="2 3" stroke-dashoffset="0"/>
<path d="M731.5 487V844" stroke="#565656" stroke-dasharray="2 3" stroke-dashoffset="0"/>
<path d="M804.5 487V844" stroke="#565656" stroke-dasharray="2 3" stroke-dashoffset="0"/>
<path d="M876.5 487V844" stroke="#565656" stroke-dasharray="2 3" stroke-dashoffset="0"/>
<path d="M949.5 487V844" stroke="#565656" stroke-dasharray="2 3" stroke-dashoffset="0"/>
<path d="M1021.5 487V844" stroke="#565656" stroke-dasharray="2 3" stroke-dashoffset="0"/>
<path d="M1094.5 487V844" stroke="#565656" stroke-dasharray="2 3" stroke-dashoffset="0"/>
<path d="M1167.5 487V844" stroke="#565656" stroke-dasharray="2 3" stroke-dashoffset="0"/>
<path d="M1239.5 487V844" stroke="#565656" stroke-dasharray="2 3" stroke-dashoffset="0"/>
<path d="M1312.5 487V844" stroke="#565656" stroke-dasharray="2 3" stroke-dashoffset="0"/>
<path d="M1385.5 487V844" stroke="#565656" stroke-dasharray="2 3" stroke-dashoffset="0"/>
<path d="M1457.5 487V844" stroke="#565656" stroke-dasharray="2 3" stroke-dashoffset="0"/>
<path d="M1530.5 487V844" stroke="#565656" stroke-dasharray="2 3" stroke-dashoffset="0"/>
<path d="M103 780.5H1558" stroke="#565656" stroke-dasharray="2 3"/>
<path d="M103 717.5H1558" stroke="#565656" stroke-dasharray="2 3"/>
<path d="M103 653.5H1558" stroke="#565656" stroke-dasharray="2 3"/>
<path d="M103 590.5H1558" stroke="#565656" stroke-dasharray="2 3"/>
<path d="M103 527.5H1558" stroke="#565656" stroke-dasharray="2 3"/>
<path d="M101 484.5H1559M101 844.5H1559" stroke="#d2d2d2" stroke-dasharray="1 1"/>
<path d="M101.5 484V845M1558.5 484V845" stroke="#d2d2d2" stroke-dasharray="1 1"/>
<path d="M95 843.5h6M95 780.5h6M95 717.5h6M95 653.5h6M95 590.5h6M95 527.5h6M95 485.5h6M101.5 845v6M1558.5 845v6M223.5 845v6M295.5 845v6M368.5 845v6M440.5 845v6M513.5 845v6M586.5 845v6M658.5 845v6M731.5 845v6M804.5 845v6M876.5 845v6M949.5 845v6M1021.5 845v6M1094.5 845v6M1167.5 845v6M1239.5 845v6M1312.5 845v6M1385.5 845v6M1457.5 845v6M1530.5 845v6" stroke="#fff"/>
<path d="M150.5 845v6" stroke="#ff0000"/>
<path d="M333.5 486V552" stroke="#bcbcbc" stroke-dasharray="5 1" stroke-dashoffset="0"/>
<path d="M515.5 486V844" stroke="#bcbcbc" stroke-dasharray="5 1" stroke-dashoffset="0"/>
<path d="M698.5 486V844" stroke="#bcbcbc" stroke-dasharray="5 1" stroke-dashoffset="0"/>
<path d="M880.5 486V844" stroke="#bcbcbc" stroke-dasharray="5 1" stroke-dashoffset="0"/>
<path d="M1063.5 486V844" stroke="#bcbcbc" stroke-dasharray="5 1" stroke-dashoffset="0"/>
<path d="M1245.5 486V844" stroke="#bcbcbc" stroke-dasharray="5 1" stroke-dashoffset="0"/>
<path d="M1428.5 486V844" stroke="#bcbcbc" stroke-dasharray="5 1" stroke-dashoffset="0"/>
<path d="M150.5 838v-6M151.5 838v-18M152.5 842v-43M153.5 842v-28M154.5 842v-35M155.5 842v-25M156.5 838v-99M157.5 840v-30M158.5 842v-44M159.5 842v-119M160.5 841v-26M161.5 844v-21M162.5 839v-22M163.5 842v-23M164.5 838v-21M165.5 842v-27M166.5 838v-23M167.5 841v-84M168.5 844v-32M169.5 844v-27M170.5 842v-53M171.5 842v-41M172.5 842v-149M173.5 842v-49M174.5 841v-24M175.5 841v-39M176.5 842v-29M177.5 841v-51M178.5 839v-24M179.5 840v-72M180.5 841v-25M181.5 840v-32M182.5 840v-24M183.5 841v-38M184.5 839v-31M185.5 841v-30M186.5 841v-23M187.5 839v-62M188.5 839v-29M189.5 841v-35M190.5 842v-24M191.5 842v-27M192.5 841v-26M193.5 842v-30M194.5 839v-233M195.5 841v-16M196.5 841v-26M197.5 840v-29M198.5 841v-46M199.5 840v-23M200.5 841v-26M201.5 838v-113M202.5 841v-27M203.5 842v-21M204.5 842v-22M205.5 842v-39M206.5 842v-36M207.5 840v-20M208.5 842v-34M209.5 841v-43M210.5 842v-23M211.5 842v-44M212.5 840v-24M213.5 839v-43M214.5 839v-14M215.5 838v-25M216.5 842v-52M217.5 842v-21M218.5 840v-26M219.5 839v-37M220.5 842v-32M221.5 841v-50M222.5 844v-27M223.5 839v-124M224.5 841v-29M225.5 842v-31M226.5 840v-27M227.5 841v-31M228.5 842v-29M229.5 842v-36M230.5 841v-47M231.5 842v-43M232.5 842v-52M233.5 840v-32M234.5 841v-28M235.5 839v-24M236.5 841v-43M237.5 844v-23M238.5 842v-145M239.5 841v-45M240.5 841v-27M241.5 842v-28M242.5 838v-15M243.5 841v-48M244.5 840v-23M245.5 844v-131M246.5 842v-25M247.5 842v-25M248.5 841v-30M249.5 844v-29M250.5 841v-26M251.5 844v-26M252.5 842v-27M253.5 842v-19M254.5 841v-24M255.5 838v-23M256.5 841v-30M257.5 840v-28M258.5 842v-26M259.5 839v-92M260.5 842v-153M261.5 844v-24M262.5 842v-26M263.5 838v-21M264.5 839v-33M265.5 842v-49M266.5 842v-19M267.5 839v-150M268.5 841v-25M269.5 841v-47M270.5 839v-24M271.5 840v-22M272.5 842v-32M273.5 839v-22M274.5 842v-52M275.5 842v-26M276.5 842v-24M277.5 839v-20M278.5 839v-22M279.5 839v-26M280.5 840v-15M281.5 840v-46M282.5 842v-27M283.5 844v-30M284.5 840v-21M285.5 840v-46M286.5 840v-21M287.5 842v-17M288.5 842v-24M289.5 839v-178M290.5 839v-42M291.5 838v-23M292.5 842v-48M293.5 838v-17M294.5 841v-23M295.5 842v-21M296.5 840v-62M297.5 839v-22M298.5 841v-32M299.5 838v-21M300.5 840v-23M301.5 840v-22M302.5 838v-20M303.5 842v-41M304.5 842v-52M305.5 842v-26M306.5 840v-31M307.5 842v-50M308.5 841v-25M309.5 841v-36M310.5 840v-23M311.5 839v-98M312.5 841v-27M313.5 841v-48M314.5 841v-38M315.5 842v-68M316.5 841v-18M317.5 842v-30M318.5 844v-73M319.5 844v-29M320.5 841v-24M321.5 844v-27M322.5 840v-24M323.5 842v-22M324.5 838v-21M325.5 842v-53M326.5 842v-23M327.5 840v-22M328.5 841v-15M329.5 839v-27M330.5 838v-24M331.5 842v-23M332.5 841v-21M333.5 840v-169M334.5 838v-19M335.5 840v-26M336.5 839v-14M337.5 842v-26M338.5 842v-25M339.5 841v-25M340.5 838v-75M341.5 841v-16M342.5 842v-31M343.5 841v-44M344.5 842v-20M345.5 842v-27M346.5 840v-38M347.5 839v-33M348.5 842v-50M349.5 839v-21M350.5 842v-70M351.5 838v-28M352.5 842v-18M353.5 842v-31M354.5 842v-335M355.5 838v-20M356.5 838v-22M357.5 841v-16M358.5 841v-31M359.5 842v-25M360.5 841v-25M361.5 842v-24M362.5 842v-81M363.5 839v-17M364.5 844v-25M365.5 840v-49M366.5 842v-18M367.5 842v-16M368.5 841v-46M369.5 841v-88M370.5 838v-20M371.5 841v-79M372.5 842v-52M373.5 841v-50M374.5 842v-24M375.5 838v-16M376.5 841v-208M377.5 839v-32M378.5 840v-23M379.5 842v-55M380.5 840v-25M381.5 842v-28M382.5 840v-20M383.5 842v-82M384.5 841v-107M385.5 844v-24M386.5 840v-45M387.5 840v-36M388.5 842v-31M389.5 844v-23M390.5 842v-18M391.5 840v-39M392.5 842v-31M393.5 841v-52M394.5 839v-33M395.5 839v-33M396.5 842v-29M397.5 844v-31M398.5 839v-39M399.5 842v-38M400.5 841v-42M401.5 842v-34M402.5 842v-58M403.5 841v-50M404.5 839v-31M405.5 839v-105M406.5 840v-42M407.5 842v-40M408.5 841v-36M409.5 841v-31M410.5 841v-31M411.5 839v-26M412.5 844v-56M413.5 839v-30M414.5 842v-51M415.5 842v-29M416.5 840v-26M417.5 842v-28M418.5 842v-42M419.5 844v-30M420.5 842v-249M421.5 842v-32M422.5 842v-30M423.5 841v-19M424.5 839v-23M425.5 842v-37M426.5 841v-30M427.5 841v-134M428.5 842v-35M429.5 840v-47M430.5 842v-30M431.5 842v-28M432.5 841v-19M433.5 839v-26M434.5 841v-32M435.5 841v-35M436.5 839v-48M437.5 841v-26M438.5 841v-27M439.5 841v-32M440.5 842v-26M441.5 839v-29M442.5 844v-64M443.5 842v-30M444.5 844v-56M445.5 842v-28M446.5 840v-26M447.5 842v-41M448.5 844v-29M449.5 840v-247M450.5 841v-45M451.5 842v-25M452.5 841v-23M453.5 841v-32M454.5 842v-27M455.5 842v-22M456.5 840v-21M457.5 842v-49M458.5 839v-26M459.5 841v-30M460.5 841v-19M461.5 840v-36M462.5 840v-21M463.5 842v-22M464.5 844v-83M465.5 844v-26M466.5 842v-23M467.5 842v-22M468.5 840v-25M469.5 844v-28M470.5 840v-24M471.5 838v-237M472.5 840v-30M473.5 841v-22M474.5 838v-28M475.5 840v-24M476.5 841v-22M477.5 840v-41M478.5 842v-48M479.5 841v-43M480.5 839v-24M481.5 840v-49M482.5 844v-25M483.5 842v-23M484.5 838v-21M485.5 842v-27M486.5 838v-46M487.5 841v-25M488.5 839v-26M489.5 839v-22M490.5 844v-52M491.5 840v-20M492.5 838v-20M493.5 842v-197M494.5 842v-24M495.5 842v-25M496.5 840v-21M497.5 841v-27M498.5 842v-23M499.5 841v-22M500.5 842v-59M501.5 842v-27M502.5 841v-30M503.5 842v-28M504.5 838v-19M505.5 839v-34M506.5 842v-44M507.5 842v-39M508.5 842v-31M509.5 841v-28M510.5 840v-26M511.5 842v-52M512.5 841v-36M513.5 844v-33M514.5 841v-50M515.5 838v-178M516.5 840v-27M517.5 841v-28M518.5 841v-34M519.5 839v-46M520.5 842v-27M521.5 842v-19M522.5 838v-44M523.5 840v-21M524.5 840v-21M525.5 840v-38M526.5 840v-23M527.5 842v-27M528.5 840v-25M529.5 841v-50M530.5 838v-44M531.5 841v-32M532.5 842v-22M533.5 842v-32M534.5 844v-24M535.5 838v-22M536.5 842v-32M537.5 840v-306M538.5 842v-28M539.5 841v-23M540.5 842v-28M541.5 844v-33M542.5 842v-23M543.5 840v-21M544.5 842v-71M545.5 842v-21M546.5 842v-24M547.5 838v-47M548.5 840v-21M549.5 842v-27M550.5 841v-22M551.5 840v-52M552.5 841v-29M553.5 842v-20M554.5 840v-42M555.5 839v-22M556.5 838v-26M557.5 842v-25M558.5 840v-34M559.5 841v-185M560.5 842v-46M561.5 841v-25M562.5 841v-49M563.5 840v-23M564.5 842v-25M565.5 839v-19M566.5 842v-80M567.5 841v-21M568.5 840v-30M569.5 841v-21M570.5 838v-17M571.5 839v-25M572.5 840v-20M573.5 838v-24M574.5 841v-32M575.5 842v-19M576.5 842v-22M577.5 839v-20M578.5 841v-34M579.5 840v-44M580.5 842v-26M581.5 838v-49M582.5 842v-28M583.5 838v-23M584.5 842v-28M585.5 839v-28M586.5 841v-28M587.5 839v-26M588.5 842v-30M589.5 842v-49M590.5 844v-31M591.5 842v-24M592.5 841v-51M593.5 842v-27M594.5 838v-20M595.5 838v-28M596.5 838v-28M597.5 840v-23M598.5 841v-24M599.5 840v-20M600.5 842v-26M601.5 840v-44M602.5 842v-104M603.5 839v-101M604.5 841v-42M605.5 838v-32M606.5 841v-28M607.5 840v-22M608.5 840v-28M609.5 842v-36M610.5 838v-88M611.5 842v-22M612.5 841v-27M613.5 838v-19M614.5 841v-46M615.5 840v-22M616.5 844v-27M617.5 839v-21M618.5 840v-23M619.5 844v-31M620.5 842v-32M621.5 842v-24M622.5 839v-21M623.5 841v-21M624.5 838v-119M625.5 838v-18M626.5 838v-33M627.5 839v-18M628.5 841v-31M629.5 842v-21M630.5 841v-47M631.5 838v-23M632.5 841v-110M633.5 839v-18M634.5 840v-23M635.5 840v-21M636.5 842v-34M637.5 838v-14M638.5 840v-24M639.5 842v-22M640.5 842v-29M641.5 838v-14M642.5 842v-34M643.5 842v-23M644.5 844v-26M645.5 841v-47M646.5 844v-66M647.5 842v-21M648.5 842v-31M649.5 840v-19M650.5 840v-21M651.5 841v-27M652.5 841v-27M653.5 841v-158M654.5 841v-295M655.5 840v-18M656.5 844v-29M657.5 839v-17M658.5 842v-30M659.5 842v-33M660.5 844v-23M661.5 841v-22M662.5 842v-31M663.5 839v-15M664.5 840v-25M665.5 841v-16M666.5 839v-30M667.5 839v-20M668.5 842v-20M669.5 840v-18M670.5 839v-51M671.5 838v-16M672.5 841v-32M673.5 840v-27M674.5 840v-20M675.5 842v-171M676.5 844v-111M677.5 844v-35M678.5 842v-25M679.5 838v-21M680.5 841v-22M681.5 842v-41M682.5 844v-35M683.5 841v-24M684.5 839v-30M685.5 842v-24M686.5 842v-41M687.5 838v-22M688.5 842v-24M689.5 842v-40M690.5 844v-25M691.5 841v-14M692.5 841v-30M693.5 842v-30M694.5 842v-20M695.5 841v-22M696.5 841v-19M697.5 842v-32M698.5 838v-95M699.5 839v-18M700.5 842v-24M701.5 840v-31M702.5 838v-18M703.5 842v-20M704.5 842v-27M705.5 841v-60M706.5 838v-21M707.5 842v-38M708.5 844v-45M709.5 841v-25M710.5 839v-19M711.5 842v-27M712.5 841v-40M713.5 841v-38M714.5 842v-33M715.5 842v-24M716.5 842v-17M717.5 840v-15M718.5 841v-20M719.5 838v-86M720.5 839v-21M721.5 840v-26M722.5 839v-18M723.5 841v-29M724.5 842v-19M725.5 842v-19M726.5 839v-25M727.5 839v-18M728.5 841v-26M729.5 841v-42M730.5 840v-35M731.5 840v-20M732.5 842v-45M733.5 839v-28M734.5 842v-24M735.5 839v-37M736.5 840v-23M737.5 842v-16M738.5 839v-42M739.5 841v-27M740.5 844v-28M741.5 842v-222M742.5 838v-27M743.5 842v-18M744.5 840v-47M745.5 840v-41M746.5 842v-26M747.5 838v-31M748.5 842v-103M749.5 842v-27M750.5 842v-28M751.5 842v-39M752.5 841v-46M753.5 844v-38M754.5 840v-45M755.5 841v-17M756.5 839v-28M757.5 842v-28M758.5 841v-28M759.5 838v-18M760.5 842v-24M761.5 840v-47M762.5 842v-23M763.5 840v-130M764.5 841v-31M765.5 840v-32M766.5 840v-40M767.5 840v-25M768.5 840v-21M769.5 841v-36M770.5 839v-21M771.5 841v-52M772.5 842v-22M773.5 840v-36M774.5 844v-44M775.5 840v-21M776.5 840v-21M777.5 844v-29M778.5 840v-54M779.5 841v-23M780.5 842v-22M781.5 838v-13M782.5 842v-32M783.5 839v-18M784.5 841v-44M785.5 842v-119M786.5 839v-27M787.5 838v-18M788.5 842v-35M789.5 842v-22M790.5 838v-19M791.5 839v-23M792.5 842v-63M793.5 838v-16M794.5 842v-21M795.5 839v-35M796.5 840v-22M797.5 842v-21M798.5 840v-27M799.5 839v-22M800.5 844v-27M801.5 841v-37M802.5 842v-31M803.5 842v-20M804.5 842v-21M805.5 840v-35M806.5 842v-47M807.5 844v-47M808.5 841v-18M809.5 840v-20M810.5 844v-24M811.5 842v-23M812.5 841v-38M813.5 844v-36M814.5 841v-91M815.5 838v-17M816.5 842v-20M817.5 840v-18M818.5 839v-16M819.5 842v-31M820.5 842v-21M821.5 842v-52M822.5 841v-31M823.5 844v-26M824.5 841v-17M825.5 842v-16M826.5 840v-16M827.5 842v-31M828.5 844v-29M829.5 839v-16M830.5 842v-53M831.5 840v-36M832.5 842v-19M833.5 838v-17M834.5 841v-18M835.5 840v-22M836.5 840v-20M837.5 838v-24M838.5 840v-43M839.5 842v-21M840.5 839v-16M841.5 842v-23M842.5 840v-33M843.5 839v-31M844.5 839v-31M845.5 841v-13M846.5 840v-21M847.5 840v-12M848.5 840v-18M849.5 841v-24M850.5 842v-24M851.5 841v-94M852.5 842v-31M853.5 841v-27M854.5 839v-19M855.5 841v-31M856.5 841v-18M857.5 841v-17M858.5 841v-212M859.5 842v-25M860.5 841v-40M861.5 841v-15M862.5 844v-21M863.5 842v-29M864.5 838v-11M865.5 842v-61M866.5 839v-39M867.5 842v-20M868.5 839v-16M869.5 840v-15M870.5 840v-19M871.5 838v-14M872.5 841v-19M873.5 840v-19M874.5 839v-34M875.5 842v-24M876.5 844v-43M877.5 844v-37M878.5 839v-20M879.5 841v-21M880.5 838v-229M881.5 841v-22M882.5 844v-44M883.5 840v-27M884.5 841v-20M885.5 839v-21M886.5 838v-23M887.5 842v-50M888.5 841v-22M889.5 841v-20M890.5 844v-22M891.5 838v-18M892.5 842v-25M893.5 841v-20M894.5 842v-40M895.5 842v-20M896.5 842v-60M897.5 841v-19M898.5 840v-19M899.5 838v-16M900.5 844v-23M901.5 841v-21M902.5 842v-99M903.5 839v-15M904.5 840v-14M905.5 838v-23M906.5 839v-15M907.5 839v-18M908.5 842v-25M909.5 840v-54M910.5 841v-31M911.5 842v-22M912.5 842v-36M913.5 842v-12M914.5 839v-16M915.5 841v-32M916.5 838v-13M917.5 842v-28M918.5 844v-43M919.5 841v-16M920.5 840v-10M921.5 841v-17M922.5 842v-22M923.5 841v-125M924.5 842v-207M925.5 842v-17M926.5 838v-30M927.5 838v-22M928.5 838v-30M929.5 842v-25M930.5 842v-27M931.5 841v-73M932.5 840v-25M933.5 841v-18M934.5 840v-24M935.5 838v-13M936.5 840v-19M937.5 841v-25M938.5 839v-19M939.5 842v-20M940.5 841v-18M941.5 841v-35M942.5 842v-11M943.5 840v-18M944.5 838v-15M945.5 842v-131M946.5 842v-69M947.5 842v-19M948.5 841v-21M949.5 842v-17M950.5 841v-19M951.5 844v-38M952.5 839v-8M953.5 839v-25M954.5 838v-15M955.5 840v-17M956.5 842v-19M957.5 840v-12M958.5 839v-35M959.5 844v-25M960.5 841v-22M961.5 839v-21M962.5 842v-41M963.5 839v-28M964.5 842v-20M965.5 838v-15M966.5 841v-37M967.5 844v-45M968.5 841v-19M969.5 841v-31M970.5 841v-23M971.5 842v-20M972.5 839v-35M973.5 842v-19M974.5 844v-33M975.5 842v-79M976.5 839v-10M977.5 840v-19M978.5 840v-10M979.5 842v-18M980.5 842v-15M981.5 844v-24M982.5 839v-14M983.5 838v-11M984.5 842v-20M985.5 844v-18M986.5 839v-9M987.5 842v-14M988.5 842v-25M989.5 842v-59M990.5 839v-17M991.5 841v-32M992.5 842v-15M993.5 842v-16M994.5 841v-31M995.5 842v-63M996.5 842v-75M997.5 840v-15M998.5 840v-24M999.5 842v-33M1000.5 843v-27M1001.5 842v-19M1002.5 840v-17M1003.5 843v-15M1004.5 842v-37M1005.5 840v-15M1006.5 843v-17M1007.5 842v-25M1008.5 841v-14M1009.5 842v-31M1010.5 840v-15M1011.5 842v-18M1012.5 842v-37M1013.5 843v-38M1014.5 843v-20M1015.5 842v-19M1016.5 839v-16M1017.5 842v-17M1018.5 843v-94M1019.5 843v-22M1020.5 841v-24M1021.5 843v-20M1022.5 843v-35M1023.5 842v-14M1024.5 840v-15M1025.5 842v-24M1026.5 843v-23M1027.5 843v-23M1028.5 843v-20M1029.5 841v-21M1030.5 841v-19M1031.5 841v-28M1032.5 841v-24M1033.5 840v-32M1034.5 843v-21M1035.5 842v-19M1036.5 842v-20M1037.5 842v-21M1038.5 842v-19M1039.5 840v-22M1040.5 841v-61M1041.5 842v-19M1042.5 843v-35M1043.5 842v-14M1044.5 842v-19M1045.5 842v-24M1046.5 842v-37M1047.5 843v-35M1048.5 842v-11M1049.5 841v-17M1050.5 841v-15M1051.5 842v-19M1052.5 843v-24M1053.5 840v-26M1054.5 843v-19M1055.5 840v-17M1056.5 841v-21M1057.5 843v-17M1058.5 842v-35M1059.5 842v-17M1060.5 843v-16M1061.5 842v-25M1062.5 841v-145M1063.5 841v-15M1064.5 843v-36M1065.5 839v-12M1066.5 841v-17M1067.5 843v-20M1068.5 843v-21M1069.5 842v-17M1070.5 842v-17M1071.5 843v-18M1072.5 843v-19M1073.5 843v-24M1074.5 842v-15M1075.5 840v-13M1076.5 842v-10M1077.5 840v-31M1078.5 841v-17M1079.5 842v-15M1080.5 840v-32M1081.5 844v-16M1082.5 842v-15M1083.5 840v-16M1084.5 842v-200M1085.5 842v-17M1086.5 842v-18M1087.5 840v-16M1088.5 840v-16M1089.5 843v-24M1090.5 843v-19M1091.5 840v-17M1092.5 843v-28M1093.5 842v-30M1094.5 843v-15M1095.5 843v-16M1096.5 842v-18M1097.5 843v-34M1098.5 842v-18M1099.5 840v-13M1100.5 843v-20M1101.5 844v-27M1102.5 839v-11M1103.5 840v-16M1104.5 842v-11M1105.5 843v-27M1106.5 841v-50M1107.5 843v-18M1108.5 842v-17M1109.5 843v-20M1110.5 841v-32M1111.5 842v-18M1112.5 842v-24M1113.5 841v-78M1114.5 843v-17M1115.5 842v-23M1116.5 841v-23M1117.5 844v-19M1118.5 840v-19M1119.5 841v-24M1120.5 841v-21M1121.5 841v-32M1122.5 842v-16M1123.5 841v-16M1124.5 843v-30M1125.5 842v-16M1126.5 842v-14M1127.5 842v-15M1128.5 841v-122M1129.5 840v-25M1130.5 840v-10M1131.5 843v-27M1132.5 843v-19M1133.5 843v-11M1134.5 842v-18M1135.5 840v-34M1136.5 843v-18M1137.5 841v-18M1138.5 842v-17M1139.5 842v-13M1140.5 841v-33M1141.5 843v-23M1142.5 843v-11M1143.5 842v-17M1144.5 843v-19M1145.5 840v-16M1146.5 839v-14M1147.5 842v-13M1148.5 840v-29M1149.5 841v-24M1150.5 841v-92M1151.5 843v-28M1152.5 843v-18M1153.5 842v-12M1154.5 842v-14M1155.5 842v-14M1156.5 842v-23M1157.5 840v-11M1158.5 842v-10M1159.5 840v-16M1160.5 842v-20M1161.5 844v-16M1162.5 842v-14M1163.5 842v-15M1164.5 840v-29M1165.5 843v-16M1166.5 842v-13M1167.5 841v-20M1168.5 841v-21M1169.5 841v-12M1170.5 843v-15M1171.5 843v-13M1172.5 842v-129M1173.5 843v-15M1174.5 843v-38M1175.5 841v-10M1176.5 843v-31M1177.5 842v-23M1178.5 842v-13M1179.5 841v-61M1180.5 842v-27M1181.5 840v-7M1182.5 843v-13M1183.5 843v-19M1184.5 842v-21M1185.5 842v-23M1186.5 844v-15M1187.5 841v-13M1188.5 841v-14M1189.5 840v-14M1190.5 843v-19M1191.5 842v-15M1192.5 842v-17M1193.5 840v-12M1194.5 843v-40M1195.5 841v-21M1196.5 840v-24M1197.5 843v-19M1198.5 844v-18M1199.5 844v-32M1200.5 843v-19M1201.5 843v-74M1202.5 842v-23M1203.5 842v-40M1204.5 842v-12M1205.5 840v-15M1206.5 841v-13M1207.5 843v-15M1208.5 843v-17M1209.5 842v-16M1210.5 844v-26M1211.5 842v-16M1212.5 843v-16M1213.5 842v-13M1214.5 843v-14M1215.5 842v-41M1216.5 844v-17M1217.5 842v-18M1218.5 840v-12M1219.5 842v-26M1220.5 841v-20M1221.5 844v-28M1222.5 843v-16M1223.5 842v-58M1224.5 841v-12M1225.5 843v-52M1226.5 844v-17M1227.5 844v-17M1228.5 842v-15M1229.5 841v-12M1230.5 840v-27M1231.5 840v-19M1232.5 840v-18M1233.5 843v-20M1234.5 843v-15M1235.5 841v-9M1236.5 841v-17M1237.5 841v-17M1238.5 842v-23M1239.5 843v-27M1240.5 843v-26M1241.5 840v-11M1242.5 843v-13M1243.5 840v-9M1244.5 841v-13M1245.5 842v-152M1246.5 840v-9M1247.5 842v-10M1248.5 842v-12M1249.5 841v-11M1250.5 844v-16M1251.5 843v-18M1252.5 842v-13M1253.5 842v-35M1254.5 842v-12M1255.5 842v-15M1256.5 840v-8M1257.5 842v-11M1258.5 840v-14M1259.5 841v-20M1260.5 842v-22M1261.5 842v-10M1262.5 842v-17M1263.5 840v-11M1264.5 841v-12M1265.5 840v-8M1266.5 839v-47M1267.5 843v-84M1268.5 843v-26M1269.5 840v-9M1270.5 842v-13M1271.5 842v-16M1272.5 840v-14M1273.5 844v-21M1274.5 842v-28M1275.5 841v-25M1276.5 843v-9M1277.5 843v-17M1278.5 841v-27M1279.5 842v-15M1280.5 843v-18M1281.5 842v-29M1282.5 842v-15M1283.5 840v-20M1284.5 843v-14M1285.5 841v-26M1286.5 843v-21M1287.5 840v-14M1288.5 842v-52M1289.5 843v-16M1290.5 842v-34M1291.5 843v-17M1292.5 840v-16M1293.5 842v-14M1294.5 844v-17M1295.5 843v-17M1296.5 843v-18M1297.5 842v-16M1298.5 840v-10M1299.5 842v-20M1300.5 841v-13M1301.5 840v-14M1302.5 840v-7M1303.5 843v-15M1304.5 841v-21M1305.5 843v-26M1306.5 842v-15M1307.5 841v-12M1308.5 841v-13M1309.5 842v-12M1310.5 840v-43M1311.5 843v-11M1312.5 842v-12M1313.5 841v-26M1314.5 840v-21M1315.5 842v-12M1316.5 843v-17M1317.5 842v-11M1318.5 843v-20M1319.5 842v-13M1320.5 839v-11M1321.5 843v-11M1322.5 840v-11M1323.5 843v-16M1324.5 843v-27M1325.5 841v-10M1326.5 841v-12M1327.5 841v-18M1328.5 844v-18M1329.5 843v-14M1330.5 842v-20M1331.5 840v-10M1332.5 842v-40M1333.5 841v-26M1334.5 844v-19M1335.5 843v-13M1336.5 843v-14M1337.5 843v-12M1338.5 844v-17M1339.5 839v-66M1340.5 841v-41M1341.5 840v-23M1342.5 843v-12M1343.5 842v-8M1344.5 840v-16M1345.5 842v-11M1346.5 844v-26M1347.5 844v-17M1348.5 841v-23M1349.5 839v-8M1350.5 843v-20M1351.5 842v-10M1352.5 843v-17M1353.5 841v-26M1354.5 843v-36M1355.5 844v-17M1356.5 843v-19M1357.5 840v-13M1358.5 841v-25M1359.5 843v-16M1360.5 842v-16M1361.5 842v-35M1362.5 840v-11M1363.5 843v-17M1364.5 840v-13M1365.5 842v-29M1366.5 842v-15M1367.5 839v-21M1368.5 840v-14M1369.5 841v-16M1370.5 842v-12M1371.5 840v-23M1372.5 842v-27M1373.5 842v-25M1374.5 840v-12M1375.5 843v-20M1376.5 843v-16M1377.5 843v-23M1378.5 840v-18M1379.5 843v-8M1380.5 842v-12M1381.5 843v-13M1382.5 843v-12M1383.5 841v-109M1384.5 841v-18M1385.5 843v-17M1386.5 840v-25M1387.5 841v-9M1388.5 842v-15M1389.5 841v-9M1390.5 844v-18M1391.5 842v-20M1392.5 841v-18M1393.5 841v-23M1394.5 843v-16M1395.5 842v-13M1396.5 842v-13M1397.5 844v-24M1398.5 843v-14M1399.5 842v-11M1400.5 841v-12M1401.5 840v-16M1402.5 840v-13M1403.5 840v-10M1404.5 843v-26M1405.5 841v-46M1406.5 843v-14M1407.5 840v-41M1408.5 844v-15M1409.5 840v-11M1410.5 842v-19M1411.5 843v-17M1412.5 843v-12M1413.5 843v-15M1414.5 842v-16M1415.5 844v-13M1416.5 842v-19M1417.5 843v-12M1418.5 842v-16M1419.5 842v-12M1420.5 843v-28M1421.5 840v-13M1422.5 841v-15M1423.5 839v-6M1424.5 843v-14M1425.5 842v-12M1426.5 840v-10M1427.5 842v-136M1428.5 844v-14M1429.5 843v-13M1430.5 843v-23M1431.5 842v-14M1432.5 842v-20M1433.5 843v-14M1434.5 840v-9M1435.5 843v-16M1436.5 840v-9M1437.5 840v-12M1438.5 842v-14M1439.5 843v-12M1440.5 842v-11M1441.5 842v-13M1442.5 842v-19M1443.5 843v-15M1444.5 843v-12M1445.5 844v-12M1446.5 843v-20M1447.5 842v-8M1448.5 841v-12M1449.5 840v-123M1450.5 842v-11M1451.5 841v-14M1452.5 841v-12M1453.5 841v-11M1454.5 841v-11M1455.5 840v-18M1456.5 840v-73M1457.5 844v-10M1458.5 844v-11M1459.5 842v-13M1460.5 842v-11M1461.5 843v-15M1462.5 842v-13M1463.5 842v-19M1464.5 841v-8M1465.5 843v-11M1466.5 843v-11M1467.5 841v-17M1468.5 842v-7M1469.5 843v-9M1470.5 841v-8M1471.5 844v-76M1472.5 843v-12M1473.5 841v-9M1474.5 842v-19M1475.5 842v-7M1476.5 843v-18M1477.5 841v-7M1478.5 843v-55M1479.5 843v-11M1480.5 841v-17M1481.5 842v-7M1482.5 840v-13M1483.5 842v-10M1484.5 841v-6M1485.5 842v-10M1486.5 841v-8M1487.5 841v-8M1488.5 842v-9M1489.5 840v-16M1490.5 844v-14M1491.5 843v-26M1492.5 840v-8M1493.5 842v-12M1494.5 844v-13M1495.5 841v-15M1496.5 844v-17M1497.5 840v-9M1498.5 842v-21M1499.5 840v-3M1500.5 841v-13M1501.5 842v-9M1502.5 844v-12M1503.5 844v-9M1504.5 842v-10M1505.5 842v-8M1506.5 840v-8M1507.5 844v-23M1508.5 841v-9M1509.5 844v-8M1510.5 844v-11M1511.5 841v-7M1512.5 844v-10M1513.5 843v-10M1514.5 840v-6M1515.5 843v-18M1516.5 843v-8M1517.5 841v-8M1518.5 843v-7M1519.5 842v-9M1520.5 843v-10M1521.5 840v-7M1522.5 841v-72M1523.5 844v-19M1524.5 840v-10M1525.5 841v-8M1526.5 843v-15M1527.5 840v-8M1528.5 840v-5M1529.5 842v-12M1530.5 841v-8M1531.5 843v-13M1532.5 842v-11M1533.5 843v-23M1534.5 840v-9M1535.5 842v-11M1536.5 842v-8M1537.5 843v-25M1538.5 843v-18M1539.5 842v-10M1540.5 843v-7M1541.5 841v-8M1542.5 841v-19M1543.5 840v-7M1544.5 841v-7M1545.5 843v-19M1546.5 843v-6M1547.5 841v-8M1548.5 840v-7M1549.5 842v-9M1550.5 842v-11M1551.5 842v-9M1552.5 843v-11M1553.5 842v-11M1554.5 841v-16M1555.5 842v-9M1556.5 843v-12M1557.5 842v-15" stroke="#00ff00"/>
<path d="M194.5 487V844" stroke="#ffff00" stroke-dasharray="2 3" stroke-dashoffset="0"/>
<path d="M216.5 487V844" stroke="#ffff00" stroke-dasharray="2 3" stroke-dashoffset="0"/>
<path d="M238.5 487V844" stroke="#ffff00" stroke-dasharray="2 3" stroke-dashoffset="0"/>
<path d="M260.5 487V844" stroke="#ffff00" stroke-dasharray="2 3" stroke-dashoffset="0"/>
<path d="M282.5 487V844" stroke="#ffff00" stroke-dasharray="2 3" stroke-dashoffset="0"/>
<path d="M303.5 487V844" stroke="#ffff00" stroke-dasharray="2 3" stroke-dashoffset="0"/>
<path d="M325.5 487V844" stroke="#ffff00" stroke-dasharray="2 3" stroke-dashoffset="0"/>
<path d="M347.5 487V844" stroke="#ffff00" stroke-dasharray="2 3" stroke-dashoffset="0"/>
<path d="M369.5 487V844" stroke="#ffff00" stroke-dasharray="2 3" stroke-dashoffset="0"/>
<path d="M391.5 487V844" stroke="#ffff00" stroke-dasharray="2 3" stroke-dashoffset="0"/>
<path d="M413.5 487V844" stroke="#ffff00" stroke-dasharray="2 3" stroke-dashoffset="0"/>
<path d="M435.5 487V844" stroke="#ffff00" stroke-dasharray="2 3" stroke-dashoffset="0"/>
<path d="M457.5 487V844" stroke="#ffff00" stroke-dasharray="2 3" stroke-dashoffset="0"/>
<path d="M479.5 487V844" stroke="#ffff00" stroke-dasharray="2 3" stroke-dashoffset="0"/>
<path d="M501.5 487V844" stroke="#ffff00" stroke-dasharray="2 3" stroke-dashoffset="0"/>
<path d="M523.5 487V844" stroke="#ffff00" stroke-dasharray="2 3" stroke-dashoffset="0"/>
<path d="M545.5 487V844" stroke="#ffff00" stroke-dasharray="2 3" stroke-dashoffset="0"/>
<path d="M566.5 487V844" stroke="#ffff00" stroke-dasharray="2 3" stroke-dashoffset="0"/>
<path d="M588.5 487V844" stroke="#ffff00" stroke-dasharray="2 3" stroke-dashoffset="0"/>
<path d="M610.5 487V844" stroke="#ffff00" stroke-dasharray="2 3" stroke-dashoffset="0"/>
<path d="M333.5 552V671" stroke="#e8e8e8"/>
<path d="M172.5 487V844" stroke="#ff0000" stroke-dasharray="3 4.4" stroke-dashoffset="0"/>
<path d="M169 693.5h7M172.5 690v7M171 692.5h3M171 694.5h3" stroke="#ff0000"/><path d="M163 693.5h3M179 693.5h3" stroke="#ff0000"/>
</g>
<path d="M333.5 552L413.5 518" stroke="#ffff00" stroke-width="1" fill="none"/><path d="M333 552l6-5l1 4z" fill="#ffff00"/>
<text class="w cj" y="466"><tspan x="36.8">101</tspan><tspan x="56.5">机头</tspan><tspan x="81.6">2#</tspan><tspan x="96.7">驱动部</tspan><tspan x="133.4">\</tspan><tspan x="137.9">齿轮箱</tspan><tspan x="174.6">1/2</tspan><tspan x="192.7">轴输出侧</tspan><tspan x="240.9">4A</tspan><tspan x="256.4">\</tspan><tspan x="261.2">512K</tspan><tspan x="288.8">加速度</tspan><tspan x="325.4">(2000Hz)</tspan></text>
<text class="w" x="396" y="466" textLength="120" lengthAdjust="spacingAndGlyphs">2021/09/28 05:06:06</text>
<text class="w" x="536" y="466" textLength="68" lengthAdjust="spacingAndGlyphs">5.979m/s^2</text>
<text class="w" x="624" y="466" textLength="30" lengthAdjust="spacingAndGlyphs">0RPM</text>
<text class="w" x="674" y="466" textLength="117" lengthAdjust="spacingAndGlyphs">3.018Hz,0.237m/s^2</text>
<text class="w" x="831" y="466" textLength="109" lengthAdjust="spacingAndGlyphs">RMS:436.407m/s^2</text>
<text class="w" x="91.5" y="847.0" text-anchor="end">0</text>
<text class="w" x="92.8" y="784.0" text-anchor="end">0.1</text>
<text class="w" x="92.8" y="721.0" text-anchor="end">0.2</text>
<text class="w" x="92.8" y="657.0" text-anchor="end">0.3</text>
<text class="w" x="92.8" y="594.0" text-anchor="end">0.4</text>
<text class="w" x="92.8" y="531.0" text-anchor="end">0.5</text>
<text class="w" x="93" y="488.8" text-anchor="end">0.566</text>
<rect x="36" y="472" width="36" height="14.5" fill="#000"/>
<text class="w cj" x="36" y="484.3">包络谱</text>
<text class="w" x="101" y="864" text-anchor="middle">-7</text>
<text class="w" x="150" y="864" text-anchor="middle">0Hz</text>
<text class="w" x="223.1" y="864" text-anchor="middle">10</text>
<text class="w" x="295.7" y="864" text-anchor="middle">20</text>
<text class="w" x="368.4" y="864" text-anchor="middle">30</text>
<text class="w" x="441.0" y="864" text-anchor="middle">40</text>
<text class="w" x="513.6" y="864" text-anchor="middle">50</text>
<text class="w" x="586.2" y="864" text-anchor="middle">60</text>
<text class="w" x="658.8" y="864" text-anchor="middle">70</text>
<text class="w" x="731.5" y="864" text-anchor="middle">80</text>
<text class="w" x="804.1" y="864" text-anchor="middle">90</text>
<text class="w" x="876.7" y="864" text-anchor="middle">100</text>
<text class="w" x="949.3" y="864" text-anchor="middle">110</text>
<text class="w" x="1021.9" y="864" text-anchor="middle">120</text>
<text class="w" x="1094.6" y="864" text-anchor="middle">130</text>
<text class="w" x="1167.2" y="864" text-anchor="middle">140</text>
<text class="w" x="1239.8" y="864" text-anchor="middle">150</text>
<text class="w" x="1312.4" y="864" text-anchor="middle">160</text>
<text class="w" x="1385.0" y="864" text-anchor="middle">170</text>
<text class="w" x="1457.7" y="864" text-anchor="middle">180</text>
<text class="w" x="1530.3" y="864" text-anchor="middle">190</text>
<text class="w" x="1557" y="864" text-anchor="middle">194</text>
<text class="w" x="54.8" y="687.3" textLength="44.5" lengthAdjust="spacing" transform="rotate(-90 54.8 687.3)">[m/s^2]</text>
<text class="y" x="195.8" y="510" font-size="16">2X</text>
<text class="y" x="217.8" y="510" font-size="16">3X</text>
<text class="y" x="239.7" y="510" font-size="16">4X</text>
<text class="y" x="261.6" y="510" font-size="16">5X</text>
<text class="y" x="283.5" y="510" font-size="16">6X</text>
<text class="y" x="305.4" y="510" font-size="16">7X</text>
<text class="y" x="327.3" y="510" font-size="16">8X</text>
<text class="y" x="349.3" y="510" font-size="16">9X</text>
<text class="y" x="371.2" y="510" font-size="16">10X</text>
<text class="y" x="393.1" y="510" font-size="16">11X</text>
<text class="y" x="415.0" y="510" font-size="16">12X</text>
<text class="y" x="436.9" y="510" font-size="16">13X</text>
<text class="y" x="458.8" y="510" font-size="16">14X</text>
<text class="y" x="480.8" y="510" font-size="16">15X</text>
<text class="y" x="502.7" y="510" font-size="16">16X</text>
<text class="y" x="524.6" y="510" font-size="16">17X</text>
<text class="y" x="546.5" y="510" font-size="16">18X</text>
<text class="y" x="568.4" y="510" font-size="16">19X</text>
<text class="y" x="590.3" y="510" font-size="16">20X</text>
<text class="y" x="612.3" y="510" font-size="16">21X</text>
<text class="y cj" x="385" y="514" font-size="12" textLength="96" lengthAdjust="spacingAndGlyphs" stroke="#ffff00" stroke-width="0.35">轴承内圈特征频率</text>
<text x="337" y="487" font-size="12" fill="#c0c0c0" transform="rotate(90 337 487)" textLength="117" lengthAdjust="spacingAndGlyphs">25.17Hz,0.405m/s^2</text>
<text x="519.5" y="488" font-size="12" fill="#c4c4c4" transform="rotate(90 519.5 488)">2X</text>
<text x="702.5" y="488" font-size="12" fill="#c4c4c4" transform="rotate(90 702.5 488)">3X</text>
<text x="884.5" y="488" font-size="12" fill="#c4c4c4" transform="rotate(90 884.5 488)">4X</text>
<text x="1067.5" y="488" font-size="12" fill="#c4c4c4" transform="rotate(90 1067.5 488)">5X</text>
<text x="1249.5" y="488" font-size="12" fill="#c4c4c4" transform="rotate(90 1249.5 488)">6X</text>
<text x="1432.5" y="488" font-size="12" fill="#c4c4c4" transform="rotate(90 1432.5 488)">7X</text>
<text class="y" x="175" y="690" font-size="12" textLength="123" lengthAdjust="spacingAndGlyphs">(3.018Hz, 0.237m/s^2)</text>
</svg></div>
</body></html>
